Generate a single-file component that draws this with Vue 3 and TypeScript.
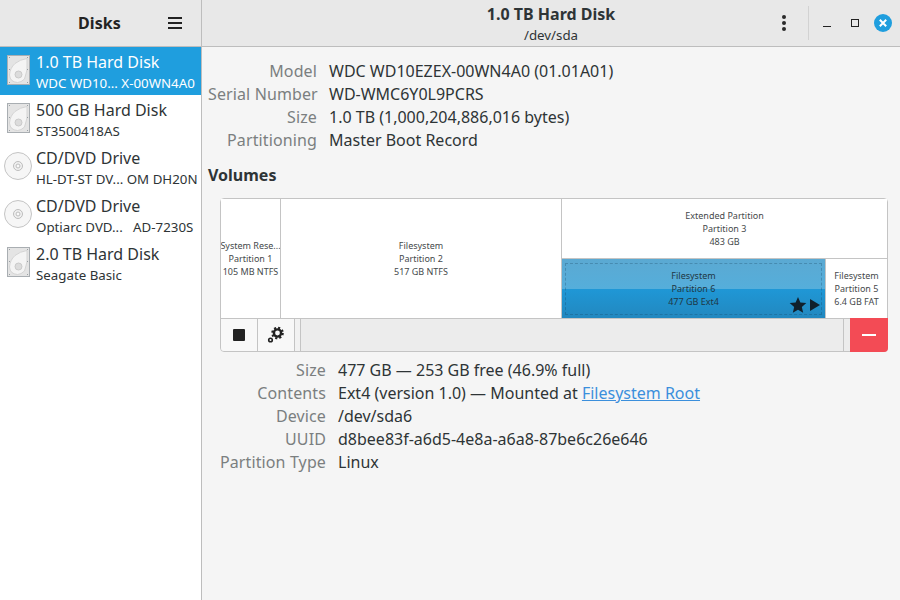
<script setup lang="ts">
interface Drive { title: string; sub: string; kind: 'hdd' | 'cd'; active?: boolean }
const drives: Drive[] = [
  { title: '1.0 TB Hard Disk', sub: 'WDC WD10... X-00WN4A0', kind: 'hdd', active: true },
  { title: '500 GB Hard Disk', sub: 'ST3500418AS', kind: 'hdd' },
  { title: 'CD/DVD Drive', sub: 'HL-DT-ST DV... OM DH20N', kind: 'cd' },
  { title: 'CD/DVD Drive', sub: 'Optiarc DVD...   AD-7230S', kind: 'cd' },
  { title: '2.0 TB Hard Disk', sub: 'Seagate Basic', kind: 'hdd' },
]
const diskInfo = [
  ['Model', 'WDC WD10EZEX-00WN4A0 (01.01A01)'],
  ['Serial Number', 'WD-WMC6Y0L9PCRS'],
  ['Size', '1.0 TB (1,000,204,886,016 bytes)'],
  ['Partitioning', 'Master Boot Record'],
]
const volInfo = [
  ['Size', '477 GB — 253 GB free (46.9% full)'],
  ['Device', '/dev/sda6'],
  ['UUID', 'd8bee83f-a6d5-4e8a-a6a8-87be6c26e646'],
  ['Partition Type', 'Linux'],
]
</script>

<template>
  <div class="window">
    <aside class="side">
      <header class="side-head">
        <span class="side-title">Disks</span>
        <svg class="burger" width="16" height="14" viewBox="0 0 16 14"><path d="M1 2h14M1 7h14M1 12h14" stroke="#222" stroke-width="2"/></svg>
      </header>
      <ul class="drives">
        <li v-for="d in drives" :key="d.title + d.sub" class="drive" :class="{ active: d.active }">
          <svg v-if="d.kind === 'hdd'" class="dicon" width="23" height="30" viewBox="0 0 23 30">
            <rect x="0.5" y="0.5" width="22" height="29" fill="#e4e4e4" stroke="#a9aeb2"/>
            <path d="M20 3.500 L20 15 L17.500 24 Q14 27.500 10.500 27.500 Q3 27 2.500 20 Q3 13 8 8.500 Q13 4.500 20 3.500Z" fill="#f4f4f4" stroke="#d4d4d4"/>
            <circle cx="11.500" cy="19.500" r="3.500" fill="#dcdcdc" stroke="#cacaca"/>
            <g fill="#9aa0a4">
              <rect x="2" y="2" width="1" height="1"/><rect x="20" y="2" width="1" height="1"/>
              <rect x="2" y="14" width="1" height="1"/><rect x="20" y="14" width="1" height="1"/>
              <rect x="2" y="27" width="1" height="1"/><rect x="20" y="27" width="1" height="1"/>
            </g>
          </svg>
          <svg v-else class="dicon cd" width="28" height="28" viewBox="0 0 28 28">
            <circle cx="14" cy="14" r="13.500" fill="#f6f6f6" stroke="#c4c4c4"/>
            <circle cx="14" cy="14" r="4.500" fill="#f0f0f0" stroke="#bdbdbd"/>
            <circle cx="14" cy="14" r="2" fill="#fafafa" stroke="#bdbdbd"/>
          </svg>
          <div class="dtext">
            <div class="dtitle">{{ d.title }}</div>
            <div class="dsub">{{ d.sub }}</div>
          </div>
        </li>
      </ul>
    </aside>

    <main class="main">
      <header class="main-head">
        <div class="head-titles">
          <div class="head-title">1.0 TB Hard Disk</div>
          <div class="head-sub">/dev/sda</div>
        </div>
        <div class="head-actions">
          <svg class="kebab" width="6" height="16" viewBox="0 0 6 16"><circle cx="3" cy="2" r="2" fill="#2a2a2a"/><circle cx="3" cy="8" r="2" fill="#2a2a2a"/><circle cx="3" cy="14" r="2" fill="#2a2a2a"/></svg>
          <span class="vsep"></span>
          <div class="wm">
            <svg class="wm-min" width="10" height="10" viewBox="0 0 10 10"><path d="M1 8.500h8" stroke="#222" stroke-width="1"/></svg>
            <svg class="wm-max" width="10" height="10" viewBox="0 0 10 10"><rect x="1.500" y="1.500" width="7" height="7" fill="none" stroke="#222" stroke-width="1"/></svg>
            <svg width="18" height="18" viewBox="0 0 18 18"><circle cx="9" cy="9" r="9" fill="#1f9ede"/><path d="M5.800 5.800l6.400 6.400M12.200 5.800l-6.400 6.400" stroke="#fff" stroke-width="2"/></svg>
          </div>
        </div>
      </header>

      <section class="content">
        <dl class="info disk">
          <template v-for="r in diskInfo" :key="r[0]">
            <dt>{{ r[0] }}</dt><dd>{{ r[1] }}</dd>
          </template>
        </dl>
        <h2 class="vol-head">Volumes</h2>
        <div class="volumes">
          <div class="parts">
            <div class="part p1"><span>System Rese...</span><span>Partition 1</span><span>105 MB NTFS</span></div>
            <div class="part p2"><span>Filesystem</span><span>Partition 2</span><span>517 GB NTFS</span></div>
            <div class="ext">
              <div class="part p3"><span>Extended Partition</span><span>Partition 3</span><span>483 GB</span></div>
              <div class="sub-parts">
                <div class="part p6">
                  <span>Filesystem</span><span>Partition 6</span><span>477 GB Ext4</span>
                  <span class="dash"></span>
                  <span class="marks">
                    <svg width="18" height="18" viewBox="0 0 16 16"><path d="M8 .8l2.100 4.900 5.300.5-4 3.500 1.200 5.200L8 12.200l-4.600 2.700 1.200-5.200-4-3.500 5.300-.5z" fill="#10202c"/></svg>
                    <svg width="10" height="12" viewBox="0 0 10 12"><path d="M0 0l10 6-10 6z" fill="#10202c"/></svg>
                  </span>
                </div>
                <div class="part p5"><span>Filesystem</span><span>Partition 5</span><span>6.4 GB FAT</span></div>
              </div>
            </div>
          </div>
          <div class="tools">
            <button class="tool first" aria-label="Stop">
              <svg width="12" height="12" viewBox="0 0 12 12"><rect width="12" height="12" rx="1" fill="#222"/></svg>
            </button>
            <button class="tool" aria-label="Settings">
              <svg width="18" height="18" viewBox="0 0 18 18">
                <circle cx="10.500" cy="7" r="3.600" fill="none" stroke="#222" stroke-width="2.400"/>
                <circle cx="10.500" cy="7" r="5.300" fill="none" stroke="#222" stroke-width="2" stroke-dasharray="2.100 2.060"/>
                <circle cx="3.500" cy="14" r="1.800" fill="none" stroke="#222" stroke-width="1.600"/>
              </svg>
            </button>
            <div class="spacer"></div>
            <div class="track"></div>
            <button class="remove" aria-label="Remove"><span></span></button>
          </div>
        </div>
        <dl class="info vol">
          <dt>{{ volInfo[0][0] }}</dt><dd>{{ volInfo[0][1] }}</dd>
          <dt>Contents</dt><dd>Ext4 (version 1.0) — Mounted at <a class="lnk">Filesystem Root</a></dd>
          <template v-for="r in volInfo.slice(1)" :key="r[0]">
            <dt>{{ r[0] }}</dt><dd>{{ r[1] }}</dd>
          </template>
        </dl>
      </section>
    </main>
  </div>
</template>

<style>
html, body { margin: 0; background: #f5f5f5; }
</style>

<style scoped>
.window { width: 900px; height: 600px; display: flex; overflow: hidden; font-family: "Noto Sans", sans-serif; font-size: 16px; color: #2e3436; background: #f5f5f5; }
.side { width: 201px; flex: none; background: #fff; border-right: 1px solid #bdbdbd; display: flex; flex-direction: column; }
.side-head { height: 46px; flex: none; background: #e8e8e8; border-bottom: 1px solid #bdbdbd; display: flex; align-items: center; position: relative; justify-content: center; }
.side-title { font-weight: 700; color: #232323; margin-left: -2px; letter-spacing: .1px; }
.burger { position: absolute; left: 167px; top: 16px; }
.drives { list-style: none; margin: 0; padding: 0; }
.drive { height: 48px; display: flex; align-items: center; position: relative; }
.drive.active { background: #1f9ede; color: #fff; }
.dicon { position: absolute; left: 7px; top: 8px; }
.dicon.cd { left: 4px; top: 9px; }
.dtext { margin-left: 36px; white-space: pre; }
.dtitle { line-height: 23px; padding-top: 1px; }
.dsub { font-size: 13.300px; line-height: 19px; }
.main { flex: 1; min-width: 0; display: flex; flex-direction: column; }
.main-head { height: 46px; flex: none; background: #e8e8e8; border-bottom: 1px solid #bdbdbd; position: relative; display: flex; align-items: center; justify-content: center; }
.head-titles { text-align: center; }
.head-title { font-weight: 700; line-height: 23px; margin-top: 1px; }
.head-sub { font-size: 13.300px; line-height: 18px; }
.head-actions { position: absolute; right: 0; top: 0; height: 46px; display: flex; align-items: center; }
.kebab { margin-right: 21px; }
.vsep { width: 1px; height: 34px; background: #d2d2d2; margin-right: 13px; }
.wm { display: flex; align-items: center; margin-right: 8px; }
.wm-min { margin-right: 18px; }
.wm-max { margin-right: 14px; }
.content { padding: 13px 12px 0 6px; }
.info { display: grid; margin: 0; row-gap: 0; line-height: 23px; }
.info dt { color: #7b7f80; text-align: right; letter-spacing: .12px; white-space: nowrap; }
.info dd { margin: 0; color: #2e3436; }
.disk { grid-template-columns: 109px auto; column-gap: 12px; }
.vol-head { font-size: 16px; font-weight: 700; margin: 12px 0 0; line-height: 23px; color: #2e3436; }
.volumes { margin: 11px 0 0 12px; height: 154px; border: 1px solid #c4c4c4; border-radius: 4px; box-sizing: border-box; width: 668px; background: #fff; display: flex; flex-direction: column; }
.parts { height: 119px; flex: none; display: flex; border-bottom: 1px solid #c4c4c4; box-sizing: content-box; }
.part { display: flex; flex-direction: column; align-items: center; justify-content: center; font-size: 9px; line-height: 13px; color: #45494b; white-space: nowrap; overflow: hidden; position: relative; background: #fff; }
.p1 { width: 59px; border-right: 1px solid #c4c4c4; }
.p2 { width: 280px; border-right: 1px solid #c4c4c4; }
.ext { flex: 1; display: flex; flex-direction: column; }
.p3 { height: 59px; border-bottom: 1px solid #c4c4c4; }
.sub-parts { flex: 1; display: flex; }
.p6 { width: 263px; border-right: 1px solid #c4c4c4; background: linear-gradient(#5ba9d2 0%, #55aedb 50%, #1f97d6 51%, #2288bf 100%); color: #1f3744; }
.p5 { flex: 1; }
.dash { position: absolute; inset: 4px 3px 3px 3px; border: 1px dashed rgba(20,60,90,.28); }
.marks { position: absolute; right: 5px; bottom: 4px; display: flex; align-items: center; gap: 3px; }
.tools { flex: 1; display: flex; background: #ececec; border-radius: 0 0 4px 4px; min-height: 0; }
.tool { width: 37px; border: 0; border-right: 1px solid #c4c4c4; background: #f8f8f8; padding: 0; display: flex; align-items: center; justify-content: center; }
.tool.first { border-radius: 0 0 0 4px; }
.spacer { width: 5px; background: #f2f2f2; }
.track { flex: 1; border-left: 1px solid #c4c4c4; border-right: 1px solid #c4c4c4; background: #ececec; }
.remove { width: 38px; margin: -1px -1px -1px 6px; border: 0; background: #f34b55; border-radius: 0 0 4px 0; padding: 0; display: flex; align-items: center; justify-content: center; }
.remove span { width: 14px; height: 2px; background: #fff; }
.vol { grid-template-columns: 118px auto; column-gap: 12px; margin-top: 7px; }
.lnk { color: #3b8fdc; text-decoration: underline; }
</style>
